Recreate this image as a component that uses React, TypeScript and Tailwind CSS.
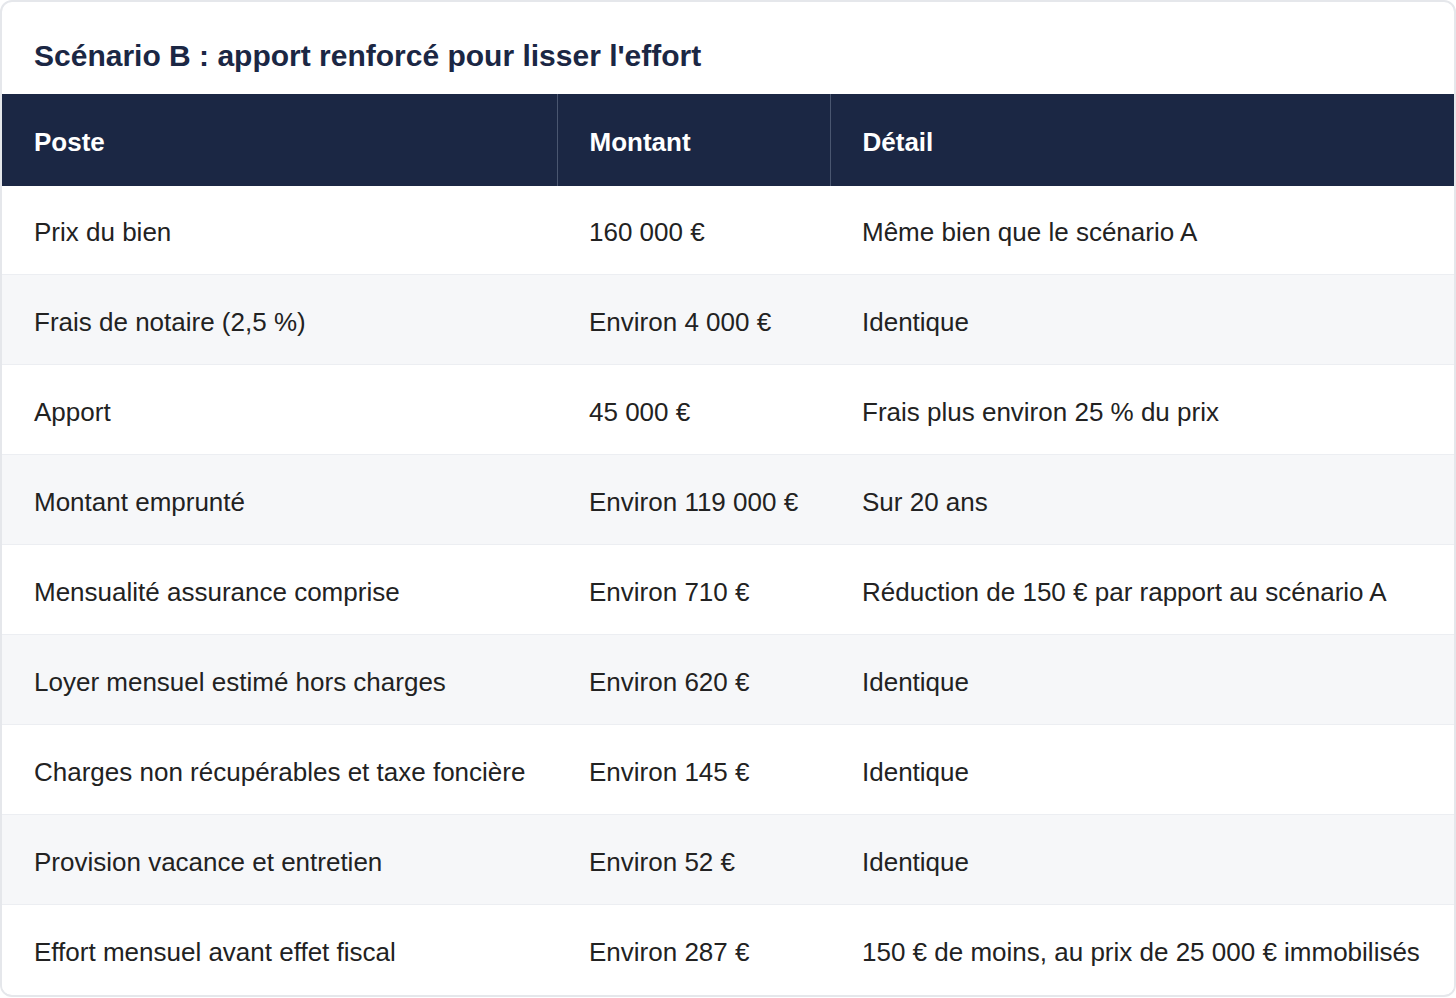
import React from "react";

const rows: [string, string, string][] = [
  ["Prix du bien", "160 000 €", "Même bien que le scénario A"],
  ["Frais de notaire (2,5 %)", "Environ 4 000 €", "Identique"],
  ["Apport", "45 000 €", "Frais plus environ 25 % du prix"],
  ["Montant emprunté", "Environ 119 000 €", "Sur 20 ans"],
  ["Mensualité assurance comprise", "Environ 710 €", "Réduction de 150 € par rapport au scénario A"],
  ["Loyer mensuel estimé hors charges", "Environ 620 €", "Identique"],
  ["Charges non récupérables et taxe foncière", "Environ 145 €", "Identique"],
  ["Provision vacance et entretien", "Environ 52 €", "Identique"],
  ["Effort mensuel avant effet fiscal", "Environ 287 €", "150 € de moins, au prix de 25 000 € immobilisés"],
];

export default function App() {
  return (
    <div
      className="w-[1456px] h-[998px] bg-white"
      style={{ fontFamily: '"Liberation Sans", Arial, sans-serif' }}
    >
      <div className="w-[1456px] h-[997px] border-2 border-[#e5e7eb] rounded-[12px] overflow-hidden bg-white flex flex-col">
        <div className="h-[92px] flex items-center px-[32px] pt-[16px]">
          <h2 className="text-[30px] font-bold text-[#1b2744] leading-none">
            Scénario B : apport renforcé pour lisser l'effort
          </h2>
        </div>
        <table className="w-full border-collapse table-fixed">
          <colgroup>
            <col className="w-[555px]" />
            <col className="w-[273px]" />
            <col />
          </colgroup>
          <thead>
            <tr className="bg-[#1b2744] h-[92px]">
              <th className="text-left text-white font-bold text-[26px] px-[32px] pt-[5px] border-r border-[#4a5670]">Poste</th>
              <th className="text-left text-white font-bold text-[26px] px-[32px] pt-[5px] border-r border-[#4a5670]">Montant</th>
              <th className="text-left text-white font-bold text-[26px] px-[32px] pt-[5px]">Détail</th>
            </tr>
          </thead>
          <tbody>
            {rows.map((r, i) => (
              <tr
                key={i}
                className={
                  (i % 2 === 1 ? "bg-[#f6f7f9] " : "bg-white ") +
                  (i === 0
                    ? "border-b border-[#eceef2] h-[88px]"
                    : i < rows.length - 1
                    ? "border-b border-[#eceef2] h-[90px]"
                    : "h-[90px]")
                }
              >
                <td className="text-[26px] text-[#222222] px-[32px] pt-[6px] whitespace-nowrap">{r[0]}</td>
                <td className="text-[26px] text-[#222222] px-[32px] pt-[6px] whitespace-nowrap">{r[1]}</td>
                <td className="text-[26px] text-[#222222] px-[32px] pt-[6px] whitespace-nowrap">{r[2]}</td>
              </tr>
            ))}
          </tbody>
        </table>
      </div>
    </div>
  );
}
